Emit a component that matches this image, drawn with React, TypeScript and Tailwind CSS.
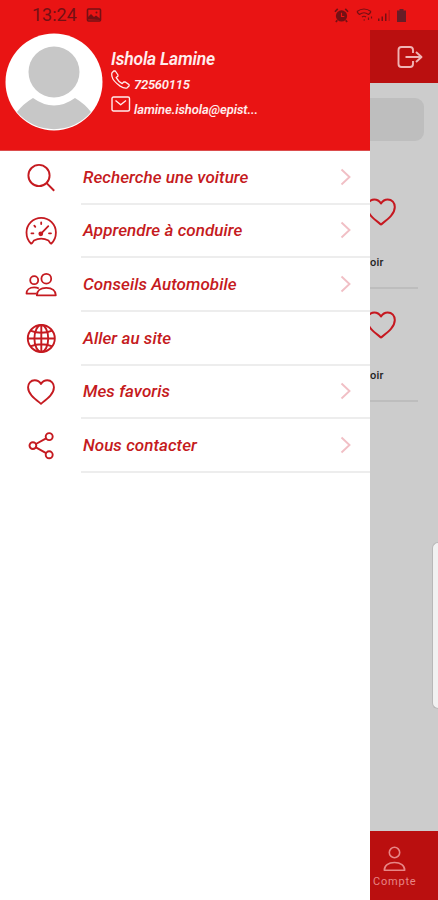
import type { ReactNode } from "react";

type MenuItem = {
  label: string;
  icon: ReactNode;
  chevron: boolean;
};

function Heart({ className }: { className?: string }) {
  return (
    <svg viewBox="0 0 32 32" className={className} fill="none" stroke="currentColor" strokeWidth="2" strokeLinejoin="round" aria-hidden="true">
      <path d="M16 7.5C14.3 4.8 12 3.5 9.3 3.5 5 3.5 2.2 6.8 2.2 11c0 7.2 7.1 12.2 13.8 17.5C22.7 23.2 29.8 18.2 29.8 11c0-4.2-2.8-7.5-7.1-7.5-2.7 0-5 1.3-6.7 4Z" />
    </svg>
  );
}

function SearchIcon() {
  return (
    <svg viewBox="0 0 32 32" className="size-8" fill="none" stroke="currentColor" strokeWidth="1.9" aria-hidden="true">
      <circle cx="14" cy="13.5" r="10.6" />
      <path d="m21.6 21.1 7.6 7.6" strokeWidth="2" />
    </svg>
  );
}

function GaugeIcon() {
  return (
    <svg viewBox="0 0 32 32" className="size-8" fill="none" stroke="currentColor" strokeWidth="1.8" strokeLinecap="round" strokeLinejoin="round" aria-hidden="true">
      <path d="M6.2 28.7C2.8 25.8 1.5 22 1.5 17.6a14.7 14.7 0 0 1 29.4 0c0 4.4-1.3 8.2-4.7 11.1-1.2-.4-1.8-1.7-2.700-3.200q-7.300-3.600-14.600 0C8 27 7.400 28.300 6.200 28.700Z" />
      <path d="M16.2 7.500v1.500M9.300 10.600l1 1.200M6.400 18.300h2M24 18.300h2M15.800 18.800l7.500-7.600" />
      <circle cx="15.8" cy="18.8" r="1.5" fill="currentColor" />
    </svg>
  );
}

function PeopleIcon() {
  return (
    <svg viewBox="0 0 32 32" className="size-8" fill="none" stroke="currentColor" strokeWidth="1.8" strokeLinejoin="round" aria-hidden="true">
      <circle cx="21.3" cy="9.7" r="4.9" />
      <circle cx="9.2" cy="11.2" r="4" />
      <path d="M11.8 26.3c0-4.3 3.5-7.5 9.5-7.5s9.5 3.2 9.5 7.5Z" />
      <path d="M11.5 24.6H1.5c0-3.6 3-6.2 7.7-6.2 1.8 0 3.4.4 4.6 1.2" />
    </svg>
  );
}

function GlobeIcon() {
  return (
    <svg viewBox="0 0 32 32" className="size-8" fill="none" stroke="currentColor" strokeWidth="1.9" aria-hidden="true">
      <circle cx="16.3" cy="15.5" r="13.5" />
      <ellipse cx="16.3" cy="15.5" rx="6.9" ry="13.5" />
      <path d="M16.3 2v27M2.8 15.5h27M5.3 7.6q11 4.4 22 0M5.3 23.4q11-4.4 22 0" />
    </svg>
  );
}

function ShareIcon() {
  return (
    <svg viewBox="0 0 32 32" className="size-8" fill="none" stroke="currentColor" strokeWidth="1.9" aria-hidden="true">
      <circle cx="7.9" cy="15.6" r="3.4" />
      <circle cx="24.2" cy="6.6" r="3.5" />
      <circle cx="24.2" cy="24.8" r="3.5" />
      <path d="m10.9 14 10.2-5.7M10.9 17.3l10.2 5.8" />
    </svg>
  );
}

const menuItems: MenuItem[] = [
  { label: "Recherche une voiture", icon: <SearchIcon />, chevron: true },
  { label: "Apprendre à conduire", icon: <GaugeIcon />, chevron: true },
  { label: "Conseils Automobile", icon: <PeopleIcon />, chevron: true },
  { label: "Aller au site", icon: <GlobeIcon />, chevron: false },
  { label: "Mes favoris", icon: <Heart className="size-[30px]" />, chevron: true },
  { label: "Nous contacter", icon: <ShareIcon />, chevron: true },
];

function StatusBar() {
  return (
    <div className="flex h-[30px] shrink-0 items-center bg-[#e91414] pl-8 pr-[29px] text-[#741014]">
      <span className="text-[18px] leading-[30px]">13:24</span>
      <svg viewBox="0 0 16 14" className="ml-[9px] h-[14px] w-4" aria-hidden="true">
        <rect x="1.5" y="1" width="13" height="12" rx="1" fill="none" stroke="currentColor" strokeWidth="1.6" />
        <path d="M2 11.5V9l3-3 3 3 2-1.5 4 3v1.5Z" fill="currentColor" />
        <circle cx="10.5" cy="4.5" r="1" fill="currentColor" />
      </svg>

      <div className="ml-auto flex items-center">
        <svg viewBox="0 0 16 16" className="size-[15px]" aria-hidden="true">
          <circle cx="8" cy="8.5" r="6" fill="currentColor" />
          <path d="m1 4 3-3M12 1l3 3M3.5 13 2 15M12.5 13l1.5 2" stroke="currentColor" strokeWidth="1.8" />
          <path d="M8 5v4h3" fill="none" stroke="#e91414" strokeWidth="1.2" />
        </svg>
        <svg viewBox="0 0 18 16" className="ml-[7px] h-4 w-[18px]" fill="none" stroke="currentColor" strokeWidth="1.2" aria-hidden="true">
          <path d="M1 4.5q7-5 14 0M1 4.5q1 2 2.5 3M15 4.5q-1 2-2.5 3M3.500 7.500q4.500-3.500 9 0M6 10q2-1.500 4 0" />
          <path d="M7.5 13h1.5M12.5 10.5v2.500M15.500 9.500v2" />
        </svg>
        <svg viewBox="0 0 15 14" className="ml-[3px] h-[14px] w-[15px]" fill="currentColor" aria-hidden="true">
          <path d="M1 10.5h1.5V13H1ZM4.500 8.500H6V13H4.500ZM8 5.500h1.500V13H8Z" />
          <path d="M11.5 2h1.5v11h-1.5Z" opacity=".35" />
        </svg>
        <svg viewBox="0 0 11 14" className="ml-[4px] mr-[2px] h-[14px] w-[11px]" aria-hidden="true">
          <path d="M3.5 1h4v1.500h2.500V14H1V2.500h2.500Z" fill="#671d27" />
        </svg>
      </div>
    </div>
  );
}

function Profile() {
  return (
    <div className="flex h-[121px] shrink-0 border-b border-[#db4d4d] bg-[#e91414] pl-[5px] pt-[3px] text-[#ffeded]">
      <svg viewBox="0 0 98 98" className="size-[98px] shrink-0" aria-hidden="true">
        <circle cx="49" cy="49" r="48.5" fill="white" />
        <path d="M12 79Q18 71 28 65Q49 80 70 65Q80 71 86 79A48.5 48.5 0 0 1 12 79Z" fill="#c7c7c7" />
        <circle cx="49" cy="39" r="25.5" fill="#c7c7c7" />
      </svg>
      <div className="ml-2 pt-[15px] italic">
        <div className="text-[17.5px] font-semibold leading-[22px] tracking-[-0.2px]">Ishola Lamine</div>
        <div className="flex h-[25px]">
          <svg viewBox="0 0 19 19" className="size-[19px]" fill="none" stroke="currentColor" strokeWidth="1.3" strokeLinejoin="round" aria-hidden="true">
            <path d="m1 2.8 2-2 1.3.2 2.7 4-.2 1.3-1.6 1.3q2.2 4 6 6l1.500-1.600 1.300-.2 4 2.800.2 1.200-2 2q-2.800 1-7-1.700C5.500 13.500 1.500 9.500 1 6.500.6 4.500.7 3.300 1 2.800Z" />
          </svg>
          <span className="ml-1 pt-[7px] text-[13px] font-semibold leading-4 tracking-[-0.25px]">72560115</span>
        </div>
        <div className="flex h-6">
          <svg viewBox="0 0 20 16" className="mt-px h-4 w-5" fill="none" stroke="currentColor" strokeWidth="1.4" strokeLinejoin="round" aria-hidden="true">
            <rect x="1" y="1" width="17.5" height="14" rx="1.5" />
            <path d="m4.5 4.500 5.200 4.200L15 4.500" />
          </svg>
          <span className="ml-[3px] pt-[7px] text-[13px] font-semibold leading-4 tracking-[-0.07px]">lamine.ishola@epist...</span>
        </div>
      </div>
    </div>
  );
}

function MenuRow({ item }: { item: MenuItem }) {
  return (
    <li className="flex">
      <div className="flex w-[81px] shrink-0 items-center pl-[25px]">
        <span className="flex w-8 justify-center">{item.icon}</span>
      </div>
      <button type="button" className="flex min-w-0 flex-1 items-center justify-between border-b-2 border-[#ededed] pl-[2px] pr-[19px] text-left">
        <span className="whitespace-nowrap text-[17px] font-medium italic leading-6 tracking-[0.05px]">{item.label}</span>
        {item.chevron && (
          <svg viewBox="0 0 11 18" className="h-[18px] w-[11px] text-[#f1bfc5]" fill="none" stroke="currentColor" strokeWidth="1.9" aria-hidden="true">
            <path d="m1.5 1.5 8 7.5-8 7.5" />
          </svg>
        )}
      </button>
    </li>
  );
}

function FavoriteEntry() {
  return (
    <div className="flex h-[113px] flex-col border-b-2 border-[#bdbdbd]">
      <Heart className="-ml-[5px] mt-[20px] h-[32px] w-8 text-[#c61820]" />
      <span className="mt-[27px] text-[11px] font-medium leading-4 tracking-[0.2px] text-[#222]">oir</span>
    </div>
  );
}

function PageBehind() {
  return (
    <div className="flex w-[68px] shrink-0 flex-col overflow-hidden bg-[#cccccc]">
      <div className="flex h-[53px] shrink-0 items-center bg-[#ba0f0f] pl-[27px] text-[#f0b4b4]">
        <svg viewBox="0 0 26 22" className="h-[22px] w-[26px]" fill="none" stroke="currentColor" strokeWidth="1.9" strokeLinejoin="round" aria-hidden="true">
          <path d="M16 7V4q0-3-3-3H4.500Q1.500 1 1.500 4v14q0 3 3 3H13q3 0 3-3v-3M8.500 11h16M19 6l5.500 5-5.500 5" />
        </svg>
      </div>
      <div className="mt-[15px] h-[43px] w-[54px] shrink-0 rounded-r-[9px] bg-[#bebebe]" />
      <div className="mr-5 mt-[35px]">
        <FavoriteEntry />
        <FavoriteEntry />
      </div>
      <div className="mt-auto flex h-[69px] shrink-0 flex-col bg-[#ba0f0f] text-[#e78686]">
        <svg viewBox="0 0 24 26" className="ml-[13px] mt-[15px] h-[26px] w-6" fill="none" stroke="currentColor" strokeWidth="1.6" strokeLinejoin="round" aria-hidden="true">
          <circle cx="11.5" cy="6.5" r="5.2" />
          <path d="M1.3 24.2c0-4.400 4-7.700 10.200-7.700s10.200 3.300 10.200 7.700Z" />
        </svg>
        <span className="ml-[3px] mt-[2px] text-[11px] leading-4 tracking-[0.8px]">Compte</span>
      </div>
    </div>
  );
}

export default function App() {
  return (
    <div className="relative flex h-[900px] w-[438px] flex-col overflow-hidden bg-white font-['Roboto',sans-serif]">
      <StatusBar />
      <div className="flex min-h-0 flex-1">
        <nav className="flex w-[370px] shrink-0 flex-col bg-white">
          <Profile />
          <ul className="grid h-[322px] grid-rows-6 text-[#c51a20]">
            {menuItems.map((item) => (
              <MenuRow key={item.label} item={item} />
            ))}
          </ul>
        </nav>
        <PageBehind />
      </div>
      {/* edge panel handle */}
      <div className="absolute right-0 top-[542px] h-[167px] w-[6px] rounded-l-[6px] border border-r-0 border-[#b8b8b8] bg-[#f1f1f1]" />
    </div>
  );
}
